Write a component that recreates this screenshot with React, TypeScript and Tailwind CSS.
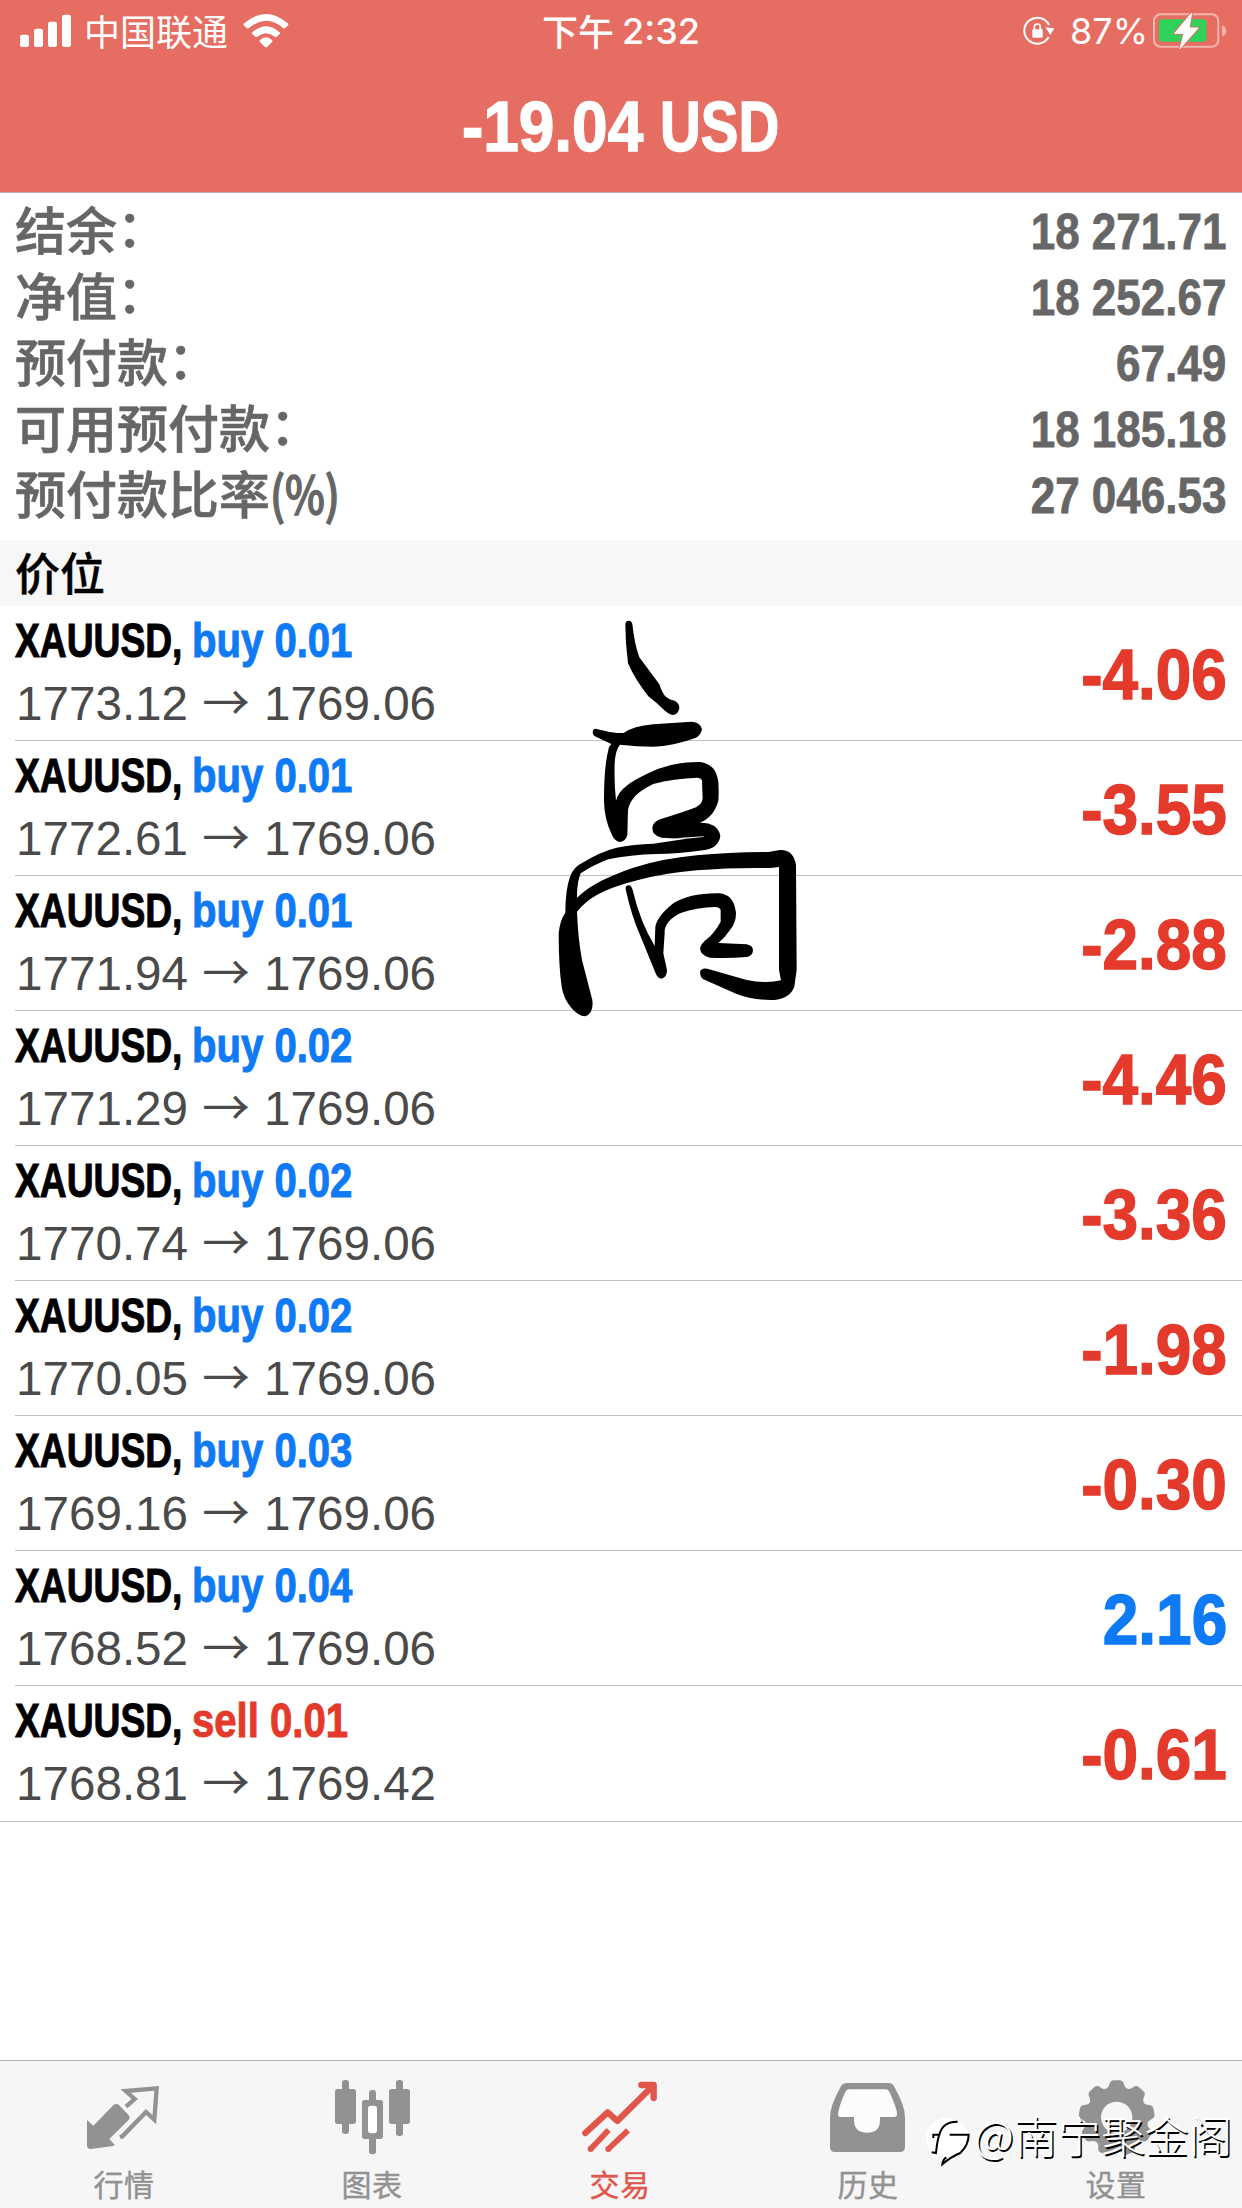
import type { ReactNode } from "react";

const CJK = "font-['Noto_Sans_CJK_SC',sans-serif]";
const SANS = "font-['Liberation_Sans',Arial,sans-serif]";

const account = [
  { label: "结余", colon: true, value: "18 271.71" },
  { label: "净值", colon: true, value: "18 252.67" },
  { label: "预付款", colon: true, value: "67.49" },
  { label: "可用预付款", colon: true, value: "18 185.18" },
  { label: "预付款比率", colon: false, value: "27 046.53" },
];

const positions = [
  { side: "buy", lots: "0.01", open: "1773.12", now: "1769.06", profit: "-4.06" },
  { side: "buy", lots: "0.01", open: "1772.61", now: "1769.06", profit: "-3.55" },
  { side: "buy", lots: "0.01", open: "1771.94", now: "1769.06", profit: "-2.88" },
  { side: "buy", lots: "0.02", open: "1771.29", now: "1769.06", profit: "-4.46" },
  { side: "buy", lots: "0.02", open: "1770.74", now: "1769.06", profit: "-3.36" },
  { side: "buy", lots: "0.02", open: "1770.05", now: "1769.06", profit: "-1.98" },
  { side: "buy", lots: "0.03", open: "1769.16", now: "1769.06", profit: "-0.30" },
  { side: "buy", lots: "0.04", open: "1768.52", now: "1769.06", profit: "2.16" },
  { side: "sell", lots: "0.01", open: "1768.81", now: "1769.42", profit: "-0.61" },
];

function StatusBar() {
  return (
    <div className="flex h-[62px] items-center justify-between text-white">
      <div className="flex w-[500px] items-center">
        <svg className="ml-[19px] h-[34px] w-[54px]" viewBox="57 39 162 102" fill="#fff">
          <rect x="60" y="101" width="27" height="37" rx="7" />
          <rect x="102" y="83" width="27" height="55" rx="7" />
          <rect x="144" y="62" width="27" height="76" rx="7" />
          <rect x="186" y="41" width="27" height="97" rx="7" />
        </svg>
        <span className={`ml-[11px] pb-[2px] text-[36px] leading-[60px] font-normal ${CJK}`}>中国联通</span>
        <svg className="ml-[15px] h-[34px] w-[46px]" viewBox="729 38 138 102" fill="#fff">
          <path d="M731 67Q798 9 865 67Q866 71 862 74L856 80Q852 83 848 79Q798 38 748 79Q744 83 740 80L733 74Q729 71 731 67Z" />
          <path d="M757 93Q798 56 839 93Q842 96 838 99L830 106Q826 109 822 105Q798 86 774 105Q770 109 766 106L758 99Q754 96 757 93Z" />
          <path d="M780 116Q798 99 816 116Q819 119 816 122L802 136Q798 139 794 136L780 122Q777 119 780 116Z" />
        </svg>
      </div>
      <div className="flex items-center gap-[8px] pb-[2px] text-[36px] leading-[60px]">
        <span className={`font-medium ${CJK}`}>下午</span>
        <span className="translate-y-[1px] font-['Inter',sans-serif] font-medium">2:32</span>
      </div>
      <div className="flex w-[500px] items-center justify-end">
        <svg className="h-[34px] w-[34px]" viewBox="125 45 102 102" fill="none" stroke="#fff">
          <path d="M206 78A39 39 0 1 0 205 114" strokeWidth="6" />
          <path d="M195 85L222 88L210 108Z" fill="#fff" stroke="none" />
          <rect x="156" y="91" width="31" height="25" rx="3" fill="#fff" stroke="none" />
          <path d="M162 92V84Q162 75 171 75Q180 75 180 84V92" strokeWidth="5" />
        </svg>
        <span className="ml-[14px] w-[76px] font-['Inter',sans-serif] text-[36px] leading-[62px] font-normal">87%</span>
        <svg className="mr-[14px] ml-[6px] h-[38px] w-[76px]" viewBox="516 34 228 114">
          <rect x="522" y="41" width="193" height="97" rx="20" fill="none" stroke="#f4b5ae" strokeWidth="6" />
          <path d="M726 74Q739 80 739 91Q739 102 726 108Z" fill="#f4b5ae" />
          <rect x="537" y="56" width="142" height="67" rx="9" fill="#30d158" />
          <path d="M635 37L584 98H612L600 144L654 82H627Z" fill="#fff" stroke="#e66d62" strokeWidth="8" strokeLinejoin="round" />
          <path d="M635 37L584 98H612L600 144L654 82H627Z" fill="#fff" stroke="#fff" strokeWidth="3" strokeLinejoin="round" />
        </svg>
      </div>
    </div>
  );
}

function HandwrittenNote() {
  return (
    <svg className="absolute top-[600px] left-[530px] h-[430px] w-[300px]" viewBox="0 0 900 1290" fill="#000">
      <path d="M286 72Q287 62 296 62Q305 62 307 72Q313 130 328 172L388 253Q396 277 405 288Q418 300 434 302Q449 310 448 325Q444 345 428 345Q413 342 400 328Q380 308 355 289Q315 238 294 190Q286 130 286 72Z" />
      <path d="M190 390Q195 384 203 388Q232 396 262 399H281Q310 378 370 373L485 365Q512 367 516 388Q512 407 498 413Q430 438 370 440Q320 440 270 434Q256 450 254 490Q252 550 258 602C266 570 300 545 350 522Q420 485 510 486C545 491 560 510 565 545Q567 580 565 603C555 635 540 655 510 668Q565 668 571 708Q566 743 525 750Q440 762 380 762Q300 764 235 778Q190 795 152 820Q140 850 141 893C185 850 240 828 310 803Q400 775 500 766Q600 756 715 756L750 750Q790 748 798 795L800 1110L793 1160Q778 1200 720 1200Q660 1198 620 1182L520 1138Q508 1128 511 1112Q517 1103 532 1106L650 1140Q710 1152 753 1141L747 1110V801L722 804Q600 802 500 811Q400 820 325 840Q250 858 200 885Q165 905 141 935Q144 1015 156 1080L187 1200Q192 1240 165 1249Q145 1248 125 1225Q100 1195 95 1160Q86 1100 86 1000Q90 960 106 938Q106 870 120 830Q132 800 155 790Q210 755 260 743Q310 733 370 731L465 717L395 713Q366 706 367 683Q370 665 390 658Q450 640 498 622Q517 612 518 594Q517 575 516 541Q513 534 503 533Q430 535 370 552C320 575 300 600 294 630L292 705Q286 726 268 726Q252 722 245 703Q222 655 222 600Q222 500 235 450Q237 438 244 432L193 408Q185 401 190 390Z" />
      <path d="M287 868Q285 855 298 856Q305 858 308 870Q330 965 374 1038L376 982Q380 950 430 910Q480 878 570 880Q613 885 618 940Q618 970 600 990Q585 1013 565 1029L650 1033Q670 1037 669 1053Q667 1068 650 1071Q590 1076 540 1073Q512 1068 510 1045Q514 1030 530 1018Q555 997 572 965V930Q568 921 556 921Q500 922 452 939C420 955 402 975 404 1000L400 1060L411 1110Q411 1132 395 1136Q382 1135 375 1115L330 1005Q305 950 287 868Z" />
      <path d="M432 715L522 709L520 711L460 717Z" fill="#fff" />
    </svg>
  );
}

const gearPath = (() => {
  const cx = 650;
  const cy = 234;
  const pts: string[] = [];
  const at = (r: number, deg: number) => {
    const a = ((deg - 90) * Math.PI) / 180;
    return `${(cx + r * Math.cos(a)).toFixed(1)} ${(cy + r * Math.sin(a)).toFixed(1)}`;
  };
  for (let i = 0; i < 9; i++) {
    const d = i * 40;
    pts.push(`${i === 0 ? "M" : "L"}${at(104, d - 12)}`);
    pts.push(`Q${at(114, d - 10)} ${at(114, d - 5)}`);
    pts.push(`L${at(114, d + 5)}`);
    pts.push(`Q${at(114, d + 10)} ${at(104, d + 12)}`);
    pts.push(`Q${at(84, d + 20)} ${at(104, d + 28)}`);
  }
  return pts.join("") + "Z";
})();

function Tab({ label, active, children, box }: { label: string; active?: boolean; children: ReactNode; box: string }) {
  return (
    <div className={`flex w-[248px] flex-col items-center pt-[15px] ${active ? "text-[#e0564a]" : "text-[#929292]"}`}>
      <svg className="h-[80px] w-[80px]" viewBox={box} fill="currentColor">
        {children}
      </svg>
      <span className={`mt-[7px] text-[30px] leading-[40px] tracking-[0.5px] [-webkit-text-stroke:0.4px_currentColor] ${CJK}`}>
        {label}
      </span>
    </div>
  );
}

function TabBar() {
  return (
    <nav className="flex h-[148px] border-t border-[#b2b2b2] bg-[#f6f6f6]">
      <Tab label="行情" box="252 108 240 240">
        <path d="M261 240L280 257L340 196Q349 188 358 196L386 226Q392 233 385 241L328 297L344 314L340 318L272 327Q261 327 261 316Z" />
        <path d="M378 200L404 177L377 153L470 145L463 239L438 216L367 289L360 292" fill="none" stroke="currentColor" strokeWidth="13" />
      </Tab>
      <Tab label="图表" box="996 108 240 240">
        <rect x="1026" y="120" width="21" height="162" rx="9" />
        <rect x="1005" y="147" width="63" height="105" rx="8" />
        <rect x="1188" y="120" width="21" height="168" rx="9" />
        <rect x="1167" y="147" width="63" height="105" rx="8" />
        <rect x="1107" y="150" width="21" height="193" rx="9" />
        <rect x="1086" y="180" width="63" height="117" rx="8" />
        <rect x="1104" y="197" width="27" height="83" rx="9" fill="#fff" />
      </Tab>
      <Tab label="交易" active box="120 108 240 240">
        <g fill="none" stroke="currentColor" strokeWidth="19" strokeLinejoin="round">
          <path d="M136 279L203 217L232 243L338 138" strokeLinecap="round" />
          <path d="M304 135H341V174" strokeLinecap="round" />
          <path d="M152 327L206 270M205 327L264 271" strokeWidth="17" />
        </g>
        <circle cx="152" cy="327" r="9" />
        <circle cx="205" cy="327" r="9" />
      </Tab>
      <Tab label="历史" box="864 108 240 240">
        <path d="M922 129H1045Q1057 129 1062 139Q1095 197 1095 232V320Q1095 336 1080 336H885Q870 336 870 320V232Q870 197 903 139Q909 129 922 129Z" />
        <path d="M928 148H1036Q1044 148 1048 155Q1071 205 1071 222Q1071 231 1062 231H1020V240Q1020 278 982 278Q942 278 942 240V231H902Q893 231 894 222Q897 198 916 156Q920 148 928 148Z" fill="#fcfcfc" />
      </Tab>
      <Tab label="设置" box="528 108 240 240">
        <path d={gearPath} />
        <circle cx="650" cy="232" r="47" fill="#f6f6f6" />
      </Tab>
    </nav>
  );
}

function Watermark() {
  return (
    <div className="absolute top-[2106px] left-[925px] flex items-start">
      <svg className="h-[66px] w-[48px]" viewBox="72 204 144 198">
        <path d="M95 360Q72 330 76 286Q88 245 135 240Q185 240 202 285Q202 320 180 343Q155 355 122 380Q120 365 126 351Z" fill="#fff" />
        <path d="M97 300V290H115Q125 250 170 251M115 290Q109 305 105 345L92 343M146 290H203Q203 320 178 345Q150 356 124 379Q126 364 136 358" fill="none" stroke="#000" strokeWidth="6" />
      </svg>
      <span
        className={`-mt-[5px] ml-[1px] text-[43.7px] leading-[66px] font-light whitespace-nowrap text-white [text-shadow:1.5px_1.5px_0.5px_#000] ${CJK}`}
      >
        @南宁聚金阁
      </span>
    </div>
  );
}

export default function App() {
  return (
    <div className="relative flex h-[2208px] w-[1242px] flex-col overflow-hidden bg-white">
      <header className="h-[193px] shrink-0 border-b border-[#c9a5a5] bg-[#e66d62]">
        <StatusBar />
        <h1
          className={`flex h-[130px] pl-[462px] text-[71px] leading-[130px] font-bold whitespace-nowrap text-white [-webkit-text-stroke:1.5px_currentColor] ${SANS}`}
        >
          <span className="w-[198px]">
            <span className="inline-block origin-left scale-x-[0.9]">-19.04</span>
          </span>
          <span className="inline-block origin-left scale-x-[0.795]">USD</span>
        </h1>
      </header>

      <section className="h-[347px] shrink-0 pr-4 pl-[15px] pt-[5px] text-[#666]">
        {account.map((row) => (
          <div key={row.label} className="flex h-[66px] items-start justify-between">
            <div className={`-mt-[3px] flex text-[51px] leading-[66px] font-medium [-webkit-text-stroke:0.6px_currentColor] ${CJK}`}>
              <span>{row.label}</span>
              {row.colon ? (
                <span className="-translate-y-[3px]">：</span>
              ) : (
                <span className="origin-left scale-x-[0.83] [-webkit-text-stroke:1.5px_currentColor]">(%)</span>
              )}
            </div>
            <span
              className={`mt-[1px] origin-right scale-x-[0.88] text-[50px] leading-[66px] font-bold [-webkit-text-stroke:0.8px_currentColor] ${SANS}`}
            >
              {row.value}
            </span>
          </div>
        ))}
      </section>

      <div
        className={`h-[66px] shrink-0 bg-[#f7f7f7] px-[15px] text-[45px] leading-[64px] font-medium text-black [-webkit-text-stroke:0.4px_currentColor] ${CJK}`}
      >
        价位
      </div>

      <main className="flex-1">
        {positions.map((p, i) => {
          const last = i === positions.length - 1;
          return (
            <div key={i} className={last ? "border-b border-[#c0c0c4]" : "pl-[15px]"}>
              <div
                className={`flex h-[135px] items-center justify-between border-b pr-4 ${SANS} ${
                  last ? "border-transparent pl-[15px]" : "border-[#c0c0c4]"
                }`}
              >
                <div>
                  <div className="flex text-[48px] leading-[62px] font-bold [-webkit-text-stroke:1px_currentColor]">
                    <span className="w-[177px] whitespace-nowrap">
                      <span className="inline-block origin-left scale-x-[0.775] text-black">XAUUSD,</span>
                    </span>
                    <span
                      className={`origin-left scale-x-[0.835] whitespace-nowrap ${
                        p.side === "buy" ? "text-[#0f7af5]" : "text-[#e43a2c]"
                      }`}
                    >
                      {p.side} {p.lots}
                    </span>
                  </div>
                  <div className="flex pl-[1px] text-[47.6px] leading-[64px] text-[#4a4a4a]">
                    <span>{p.open}</span>
                    <span className={`-mt-[4px] w-[76px] text-center ${CJK}`}>→</span>
                    <span>{p.now}</span>
                  </div>
                </div>
                <span
                  className={`origin-right translate-x-[1px] translate-y-[2px] scale-x-[0.9] text-[71px] leading-[130px] font-bold [-webkit-text-stroke:1.5px_currentColor] ${
                    p.profit.startsWith("-") ? "text-[#e43a2c]" : "text-[#0f7af5]"
                  }`}
                >
                  {p.profit}
                </span>
              </div>
            </div>
          );
        })}
      </main>

      <TabBar />
      <HandwrittenNote />
      <Watermark />
    </div>
  );
}
